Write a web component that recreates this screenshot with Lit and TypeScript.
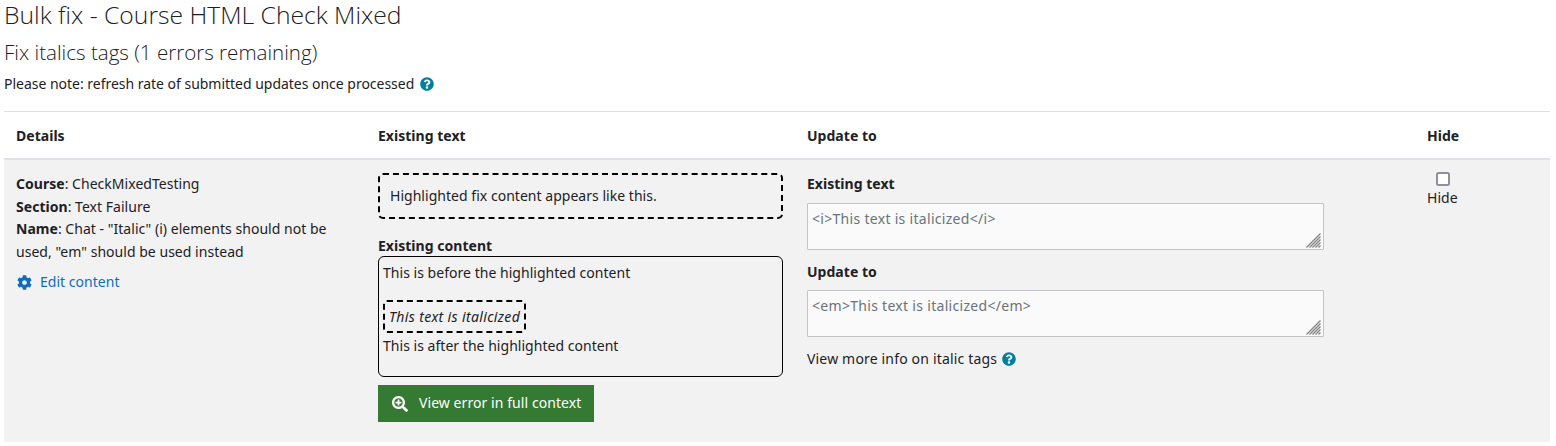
import { LitElement, html, css, svg } from "lit";
import { customElement } from "lit/decorators.js";

const help = html`<svg class="help" viewBox="0 0 512 512"><path fill="#00809b" d="M504 256c0 137-111 248-248 248S8 393 8 256 119 8 256 8s248 111 248 248zM262.700 90c-54.500 0-89.300 23-116.500 63.800-3.500 5.300-2.400 12.400 2.700 16.300l34.700 26.300c5.200 3.900 12.600 3 16.700-2.100 17.900-22.700 30.100-35.800 57.300-35.800 20.400 0 45.700 13.100 45.700 33 0 15-12.400 22.700-32.600 34-23.600 13.200-54.800 29.700-54.800 70.900V300c0 6.600 5.400 12 12 12h56c6.600 0 12-5.400 12-12v-1.300c0-28.600 83.500-29.800 83.500-107.100C379.400 133.300 319 90 262.700 90zM256 339c-25.500 0-46.200 20.700-46.200 46.200 0 25.500 20.700 46.200 46.200 46.200s46.200-20.700 46.200-46.200c0-25.500-20.700-46.200-46.200-46.200z"/></svg>`;

const gear = svg`<path fill="#0f6cbf" d="M487.400 315.700l-42.600-24.600c4.300-23.200 4.300-47 0-70.200l42.600-24.600c4.900-2.800 7.100-8.600 5.500-14-11.100-35.600-30-67.800-54.700-94.600-3.800-4.100-10-5.100-14.800-2.300L380.800 110c-17.900-15.400-38.500-27.300-60.800-35.100V25.800c0-5.600-3.900-10.500-9.400-11.700-36.700-8.200-74.300-7.800-109.200 0-5.500 1.200-9.400 6.100-9.400 11.700V75c-22.200 7.900-42.800 19.800-60.800 35.100L88.700 85.500c-4.900-2.800-11-1.900-14.800 2.300-24.700 26.700-43.600 58.900-54.700 94.600-1.700 5.400.6 11.200 5.500 14L67.300 221c-4.300 23.200-4.300 47 0 70.200l-42.600 24.600c-4.900 2.800-7.100 8.600-5.500 14 11.100 35.600 30 67.800 54.700 94.600 3.800 4.100 10 5.100 14.800 2.300l42.600-24.600c17.900 15.400 38.500 27.300 60.800 35.100v49.200c0 5.600 3.900 10.500 9.400 11.700 36.700 8.200 74.300 7.800 109.200 0 5.500-1.200 9.400-6.100 9.400-11.700v-49.200c22.200-7.900 42.800-19.800 60.800-35.100l42.600 24.600c4.900 2.800 11 1.900 14.800-2.300 24.700-26.700 43.600-58.900 54.700-94.600 1.500-5.500-.7-11.300-5.600-14.100zM256 336c-44.100 0-80-35.900-80-80s35.900-80 80-80 80 35.900 80 80-35.900 80-80 80z"/>`;

const zoom = svg`<path fill="#fff" d="M304 192v32c0 6.600-5.400 12-12 12h-56v56c0 6.600-5.400 12-12 12h-32c-6.600 0-12-5.400-12-12v-56h-56c-6.600 0-12-5.400-12-12v-32c0-6.600 5.400-12 12-12h56v-56c0-6.600 5.400-12 12-12h32c6.600 0 12 5.400 12 12v56h56c6.600 0 12 5.400 12 12zm201 284.700L476.700 505c-9.400 9.400-24.600 9.400-33.900 0L343 405.300c-4.500-4.500-7-10.600-7-17V372c-35.300 27.600-79.700 44-128 44C93.100 416 0 322.900 0 208S93.100 0 208 0s208 93.100 208 208c0 48.300-16.400 92.700-44 128h16.300c6.400 0 12.500 2.500 17 7l99.700 99.700c9.300 9.400 9.300 24.600 0 34zM344 208c0-75.200-60.800-136-136-136S72 132.800 72 208s60.800 136 136 136 136-60.800 136-136z"/>`;

const grip = html`<svg class="grip" viewBox="0 0 15 15"><path d="M14.500 .5 .5 14.500M14.500 3.500 3.500 14.500M14.500 6.500 6.500 14.500M14.500 9.500 9.500 14.500M14.500 12.500 12.500 14.500" stroke="#808080" stroke-width="1.300" fill="none"/></svg>`;

@customElement("app-root")
export class AppRoot extends LitElement {
  static styles = css`
    :host {
      display: block;
      box-sizing: border-box;
      height: 446px;
      overflow: hidden;
      padding: 0 6px 0 4px;
      font-family: "Noto Sans", "Open Sans", sans-serif;
      font-size: 14px;
      letter-spacing: 0.03px;
      line-height: 22.5px;
      color: #1d2125;
      background: #fff;
    }
    h1, h2, p { margin: 0; font-weight: 300; }
    h1 {
      font-family: "Open Sans", sans-serif;
      font-size: 24.700px;
      line-height: 30px;
      letter-spacing: 0;
    }
    h2 {
      font-family: "Open Sans", sans-serif;
      font-size: 20.550px;
      line-height: 26px;
      letter-spacing: 0;
      margin-top: 9px;
    }
    .note {
      font-weight: 400;
      letter-spacing: -0.02px;
      margin-top: 8px;
      display: flex;
      align-items: center;
      gap: 6px;
    }
    .help { width: 14px; height: 14px; flex: none; }
    .table {
      margin-top: 15px;
      border-top: 1px solid #dee2e6;
      display: grid;
      grid-template-columns: 362px 429px 620px 135px;
    }
    .th {
      font-weight: 700;
      padding: 13px 12px 11px;
      border-bottom: 2px solid #dee2e6;
    }
    .td {
      background: #f2f2f2;
      padding: 13px 12px 0;
      height: 282px;
      box-sizing: border-box;
    }
    b { font-weight: 700; }
    .edit {
      display: flex;
      align-items: center;
      gap: 8px;
      color: #0f6cbf;
      margin-top: 8px;
      padding-left: 1px;
    }
    .edit svg { width: 15px; height: 15px; }
    .fix {
      border: 2px dashed #000;
      border-radius: 5px;
      height: 46px;
      box-sizing: border-box;
      padding: 0 10px;
      display: flex;
      align-items: center;
    }
    .label { display: block; font-weight: 700; }
    .col2 .label { margin-top: 16px; line-height: 21px; }
    .content {
      border: 1px solid #000;
      border-radius: 6px;
      height: 121px;
      box-sizing: border-box;
      padding: 5px 4px;
    }
    .gap { height: 15px; }
    .mark {
      display: inline-block;
      border: 2px dashed #000;
      border-radius: 4px;
      padding: 0 4px;
      font-style: italic;
      letter-spacing: 0.35px;
      line-height: 30px;
      height: 33px;
      box-sizing: border-box;
      vertical-align: top;
    }
    .markrow { height: 33px; margin-bottom: 2px; }
    .btn {
      display: inline-flex;
      align-items: center;
      gap: 11px;
      background: #357a32;
      color: #fff;
      letter-spacing: 0.07px;
      height: 37px;
      padding: 0 13px 0 14px;
      margin-top: 8px;
    }
    .btn svg { width: 16px; height: 16px; }
    .col3 .label { line-height: 22px; }
    .area {
      background: #fafafa;
      border: 1px solid #c4c4c8;
      border-radius: 1px;
      width: 517px;
      height: 47px;
      box-sizing: border-box;
      margin-top: 8px;
      padding: 4px 4px;
      color: #6a737b;
      letter-spacing: 0.3px;
      position: relative;
      line-height: 22px;
    }
    .area.second { margin-top: 7px; }
    .grip { position: absolute; right: 2px; bottom: 1px; width: 15px; height: 15px; }
    .col3 .area + .label { margin-top: 11px; }
    .more {
      display: flex;
      align-items: center;
      gap: 5px;
      margin-top: 11px;
      letter-spacing: 0.17px;
    }
    .hide { display: flex; flex-direction: column; align-items: flex-start; }
    .box {
      width: 14px; height: 14px; box-sizing: border-box;
      border: 2px solid #8f8f9d; border-radius: 2.500px; background: #fff;
      margin: -1px 0 1px 9px;
    }
  `;

  render() {
    return html`
      <h1>Bulk fix - Course HTML Check Mixed</h1>
      <h2>Fix italics tags (1 errors remaining)</h2>
      <p class="note">Please note: refresh rate of submitted updates once processed ${help}</p>
      <div class="table">
        <div class="th">Details</div>
        <div class="th">Existing text</div>
        <div class="th">Update to</div>
        <div class="th">Hide</div>

        <div class="td">
          <div><b>Course</b>: CheckMixedTesting</div>
          <div><b>Section</b>: Text Failure</div>
          <div><b>Name</b>: Chat - "Italic" (i) elements should not be used, "em" should be used instead</div>
          <div class="edit"><svg viewBox="0 0 512 512">${gear}</svg>Edit content</div>
        </div>

        <div class="td col2">
          <div class="fix">Highlighted fix content appears like this.</div>
          <span class="label">Existing content</span>
          <div class="content">
            <div>This is before the highlighted content</div>
            <div class="gap"></div>
            <div class="markrow"><span class="mark">This text is italicized</span></div>
            <div>This is after the highlighted content</div>
          </div>
          <div class="btn"><svg viewBox="0 0 512 512">${zoom}</svg>View error in full context</div>
        </div>

        <div class="td col3">
          <span class="label">Existing text</span>
          <div class="area">&lt;i&gt;This text is italicized&lt;/i&gt;${grip}</div>
          <span class="label">Update to</span>
          <div class="area second">&lt;em&gt;This text is italicized&lt;/em&gt;${grip}</div>
          <div class="more">View more info on italic tags ${help}</div>
        </div>

        <div class="td">
          <div class="hide"><div class="box"></div><span>Hide</span></div>
        </div>
      </div>
    `;
  }
}
